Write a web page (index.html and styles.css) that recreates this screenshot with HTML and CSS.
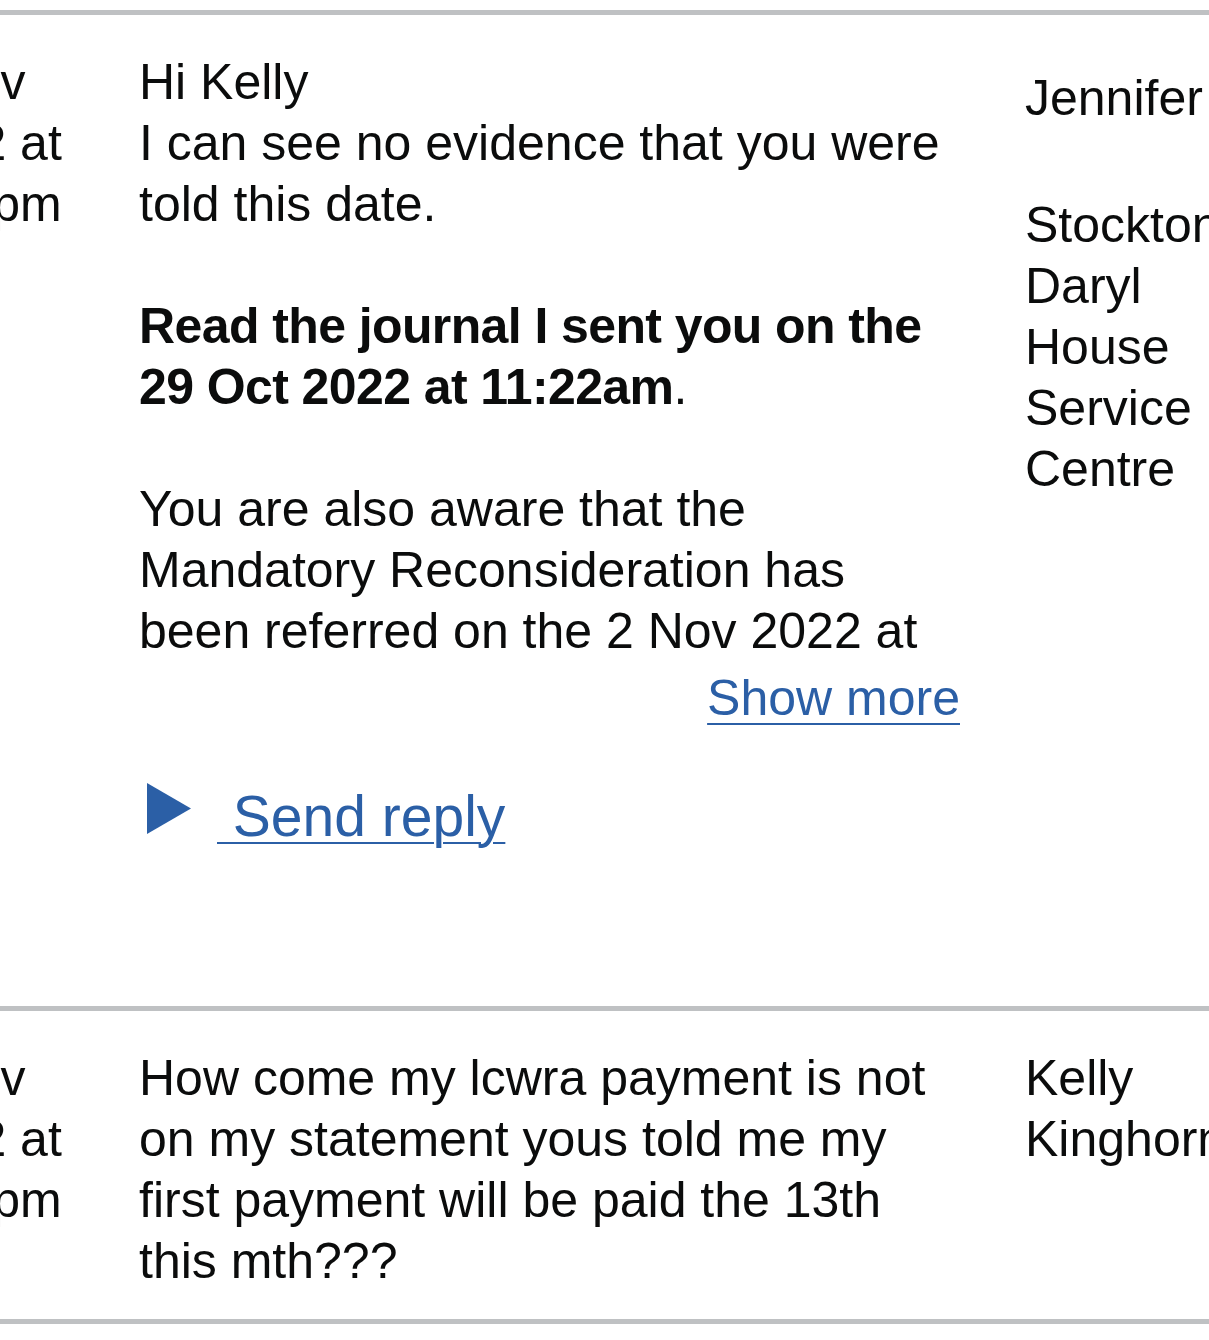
FILE: index.html
```html
<!DOCTYPE html>
<html lang="en">
<head>
<meta charset="utf-8">
<title>Journal messages</title>
<link rel="stylesheet" href="styles.css">
</head>
<body>
<div class="messages">
  <div class="row">
    <div class="cell date">2 Nov 2022 at 1:13pm</div>
    <div class="cell message">
      <div class="message-text">
        <p>Hi Kelly<br>I can see no evidence that you were told this date.</p>
        <p><strong>Read the journal I sent you on the 29 Oct 2022 at 11:22am</strong>.</p>
        <p>You are also aware that the Mandatory Reconsideration has been referred on the 2 Nov 2022 at 11:22am and you will be notified of the outcome in due course.</p>
      </div>
      <div class="show-more"><a href="#" class="link">Show more</a></div>
      <div class="reply">
        <svg class="reply-arrow" width="44" height="51" viewBox="0 0 44 51" aria-hidden="true"><polygon points="0,0 44,25.5 0,51" fill="#2b5fa6"/></svg>
        <a href="#" class="link reply-link">&nbsp;Send reply</a>
      </div>
    </div>
    <div class="cell from from-first">
      <p class="from-name">Jennifer</p>
      <p>Stockton Daryl House Service Centre</p>
    </div>
  </div>
  <div class="row">
    <div class="cell date">1 Nov 2022 at 4:05pm</div>
    <div class="cell message">
      <p>How come my lcwra payment is not on my statement yous told me my first payment will be paid the 13th this mth???</p>
    </div>
    <div class="cell from">
      <p>Kelly Kinghorn</p>
    </div>
  </div>
</div>
</body>
</html>
```

FILE: styles.css
```css
html, body {
  overflow: hidden;
}

body {
  margin: 0;
  background: #ffffff;
  color: #0b0c0c;
  font-family: "Liberation Sans", Arial, sans-serif;
  font-size: 50px;
  line-height: 61px;
}

p {
  margin: 0;
}

strong {
  letter-spacing: -0.6px;
}

.messages {
  margin-top: 10px;
  margin-left: -105px;
  border-top: 5px solid #bfc1c3;
  width: 1360px;
}

.row {
  display: grid;
  grid-template-columns: 200px 821px 230px;
  column-gap: 44px;
  border-bottom: 5px solid #bfc1c3;
  padding: 37px 0 27px;
}

.row .from {
  margin-left: 21px;
}

.message p + p {
  margin-top: 61px;
}

.message p {
  max-width: 810px;
}

.message-text {
  height: 610px;
  overflow: hidden;
}

.show-more {
  margin-top: 6px;
  text-align: right;
}

.link {
  color: #2b5fa6;
  text-decoration: underline;
  text-decoration-thickness: 2px;
  text-underline-offset: 8px;
}

.reply {
  display: flex;
  align-items: flex-start;
  gap: 26px;
  margin-top: 52px;
  margin-bottom: 127px;
  padding-left: 8px;
}

.reply-arrow {
  flex: none;
  margin-top: 2px;
}

.reply-link {
  font-size: 57px;
  line-height: 71px;
  text-underline-offset: 6px;
}

.from-first {
  padding-top: 16px;
}

.from-name {
  margin-bottom: 66px;
}
```
